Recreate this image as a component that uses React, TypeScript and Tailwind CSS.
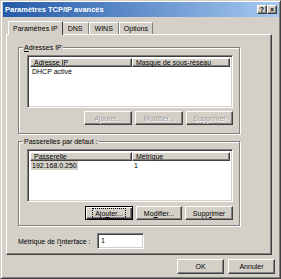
const raised =
  "border border-t-white border-l-white border-r-[#404040] border-b-[#404040] shadow-[inset_-1px_-1px_0_#808080]";
const sunken =
  "border border-t-[#808080] border-l-[#808080] border-r-white border-b-white shadow-[inset_1px_1px_0_#404040,inset_-1px_-1px_0_#d4d0c8]";

const Btn = ({
  children,
  disabled,
  focused,
  w,
}: {
  children: React.ReactNode;
  disabled?: boolean;
  focused?: boolean;
  w: string;
}) => (
  <div
    className={`${w} h-[14px] flex items-center justify-center bg-[#d4d0c8] ${
      focused
        ? "border border-black shadow-[inset_1px_1px_0_#fff,inset_-1px_-1px_0_#404040,inset_-2px_-2px_0_#808080]"
        : raised
    }`}
  >
    <span
      className={`text-[7px] leading-none px-[2px] py-[1px] ${
        disabled ? "text-[#9a9a9a] [text-shadow:1px_1px_0_#fff]" : "text-black"
      } ${focused ? "outline outline-1 outline-dotted outline-black" : ""}`}
    >
      {children}
    </span>
  </div>
);

const GroupBox = ({
  label,
  children,
  className,
}: {
  label: React.ReactNode;
  children: React.ReactNode;
  className: string;
}) => (
  <div
    className={`relative border border-[#808080] shadow-[1px_1px_0_#fff,inset_1px_1px_0_#fff] ${className}`}
  >
    <span className="absolute -top-[5px] left-[4px] bg-[#d4d0c8] px-[1px] text-[7px] leading-[9px]">
      {label}
    </span>
    {children}
  </div>
);

const ListView = ({
  cols,
  rows,
  selected,
}: {
  cols: string[];
  rows: string[][];
  selected?: number;
}) => (
  <div className={`ml-[8px] w-[206px] h-[53px] bg-white p-[2px] ${sunken}`}>
    <div className="flex h-[9px]">
      <div className={`w-[102px] flex items-center pl-[3px] text-[7px] leading-none bg-[#d4d0c8] ${raised}`}>
        {cols[0]}
      </div>
      <div className={`flex-1 flex items-center pl-[3px] text-[7px] leading-none bg-[#d4d0c8] ${raised}`}>
        {cols[1]}
      </div>
    </div>
    {rows.map((r, i) => (
      <div key={i} className="flex h-[9px] items-center text-[7px] leading-none">
        <div className="w-[102px] pl-[1px]">
          <span className={`px-[1px] py-[1px] ${selected === i ? "bg-[#d4d0c8]" : ""}`}>{r[0]}</span>
        </div>
        <div className="pl-[2px]">{r[1]}</div>
      </div>
    ))}
  </div>
);

export default function App() {
  return (
    <div
      className="w-[281px] h-[279px] bg-[#d4d0c8] text-black border border-t-[#d4d0c8] border-l-[#d4d0c8] border-r-[#404040] border-b-[#404040] shadow-[inset_1px_1px_0_#fff,inset_-1px_-1px_0_#808080] p-[1px] pl-[2px] flex flex-col"
      style={{ fontFamily: '"Liberation Sans", Arial, sans-serif' }}
    >
      {/* title bar */}
      <div className="h-[15px] bg-gradient-to-r from-[#245aa8] via-[#6390cc] to-[#a6caf0] flex items-center pl-[2px] pr-[2px]">
        <span className="flex-1 text-white font-bold text-[7.5px] leading-none">Paramètres TCP/IP avancés</span>
        <div className={`w-[10px] h-[9px] bg-[#d4d0c8] flex items-center justify-center text-[7px] font-bold leading-none ${raised}`}>
          ?
        </div>
        <div className={`w-[10px] h-[9px] bg-[#d4d0c8] flex items-center justify-center text-[7px] font-bold leading-none ${raised}`}>
          ×
        </div>
      </div>

      {/* tabs */}
      <div className="mt-[3px] ml-[5px] flex items-end h-[14px] text-[7px] leading-none relative z-10">
        <div className="h-[14px] px-[4px] flex items-center bg-[#d4d0c8] border-t border-l border-t-white border-l-white border-r border-r-[#404040] -mb-[1px] pb-[1px]">
          Paramètres IP
        </div>
        <div className="h-[12px] px-[5px] flex items-center border-t border-t-white border-r border-r-[#808080]">DNS</div>
        <div className="h-[12px] px-[5px] flex items-center border-t border-t-white border-l border-l-white border-r border-r-[#808080]">
          WINS
        </div>
        <div className="h-[12px] px-[4px] flex items-center border-t border-t-white border-l border-l-white border-r border-r-[#808080]">
          Options
        </div>
      </div>

      {/* tab panel */}
      <div className={`ml-[3px] w-[266px] h-[221px] ${raised} pl-[11px] pt-[12px] flex flex-col`}>
        <GroupBox
          className="w-[222px] h-[87px] pt-[7px]"
          label={
            <>
              <u>A</u>dresses IP
            </>
          }
        >
          <ListView cols={["Adresse IP", "Masque de sous-réseau"]} rows={[["DHCP activé", ""]]} />
          <div className="flex justify-end gap-[3px] mt-[3px] mr-[6px]">
            <Btn w="w-[48px]" disabled>
              Ajouter...
            </Btn>
            <Btn w="w-[48px]" disabled>
              Modifier...
            </Btn>
            <Btn w="w-[47px]" disabled>
              Supprimer
            </Btn>
          </div>
        </GroupBox>

        <GroupBox className="mt-[7px] w-[222px] h-[85px] pt-[7px]" label="Passerelles par défaut :">
          <ListView cols={["Passerelle", "Métrique"]} rows={[["192.168.0.250", "1"]]} selected={0} />
          <div className="flex justify-end gap-[3px] mt-[4px] mr-[6px]">
            <Btn w="w-[48px]" focused>
              Ajo<u>u</u>ter...
            </Btn>
            <Btn w="w-[46px]">
              Mo<u>d</u>ifier...
            </Btn>
            <Btn w="w-[48px]">
              Supp<u>r</u>imer
            </Btn>
          </div>
        </GroupBox>

        <div className="mt-[7px] flex items-center h-[16px]">
          <span className="w-[79px] text-[7px] leading-none">
            Métrique de l'<u>i</u>nterface :
          </span>
          <div className={`w-[47px] h-[16px] bg-white ${sunken} text-[7px] leading-none pl-[3px] pt-[3px]`}>1</div>
        </div>
      </div>

      {/* bottom buttons */}
      <div className="flex justify-end gap-[4px] mt-[4px] mr-[4px]">
        <Btn w="w-[47px] !h-[15px]">OK</Btn>
        <Btn w="w-[47px] !h-[15px]">Annuler</Btn>
      </div>
    </div>
  );
}
